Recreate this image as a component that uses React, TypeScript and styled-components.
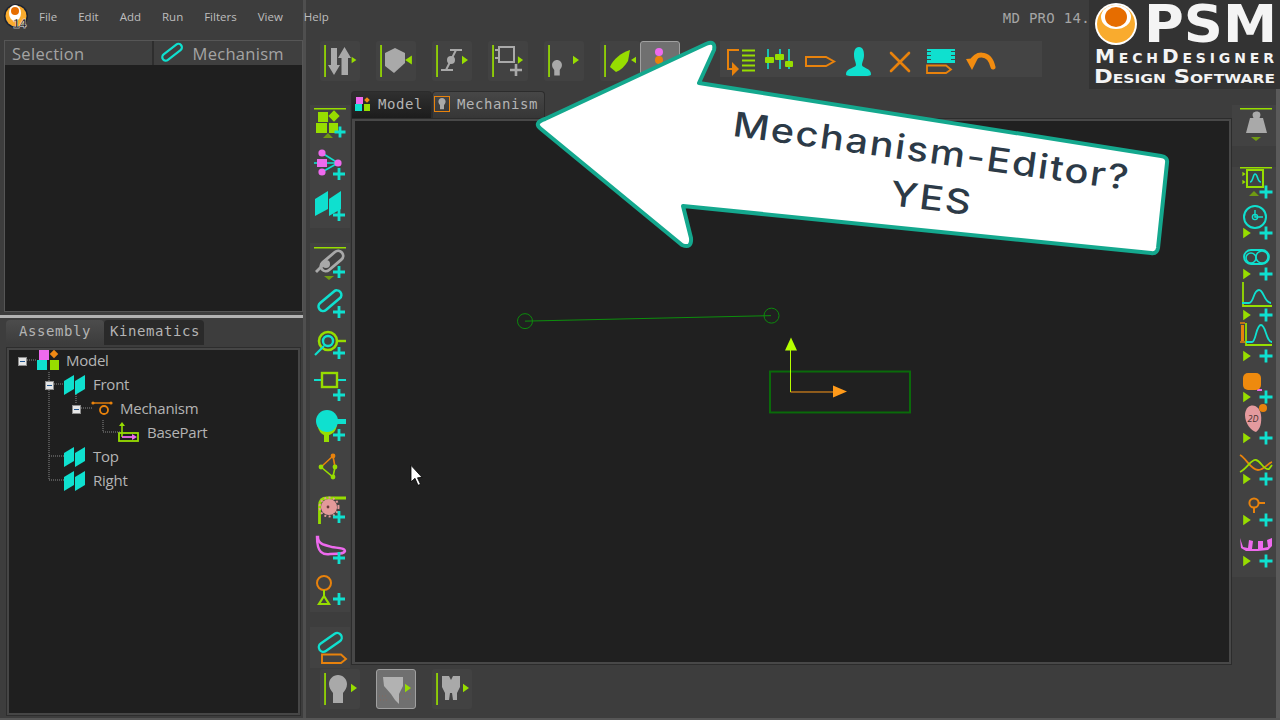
import React from "react";
import styled, { createGlobalStyle } from "styled-components";

const LIME = "#97dd00";
const CYAN = "#0fe0cf";
const ORANGE = "#e8820c";
const MAG = "#ee6aee";
const GREY = "#a9a9a9";
const DULL = "#6f9a12";

const Global = createGlobalStyle`
  html, body { margin: 0; padding: 0; background: #3d3d3d; }
  #root { width: 1280px; height: 720px; overflow: hidden; }
  * { box-sizing: border-box; }
`;

const Page = styled.div`
  position: relative;
  display: flex;
  width: 1280px;
  height: 720px;
  overflow: hidden;
  background: #3d3d3d;
  border-bottom: 2px solid #565656;
`;
const LeftColumn = styled.div`
  display: flex;
  flex-direction: column;
  width: 306px;
  flex: none;
  border-right: 3px solid #4f4f4f;
  padding-bottom: 2px;
`;
const MenuBar = styled.div`
  display: flex;
  align-items: center;
  height: 40px;
  flex: none;
  padding: 0 0 8px 4px;
`;
const MenuItems = styled.div`
  display: flex;
  flex: none;
  margin-left: 9px;
  gap: 21px;
`;
const MenuItem = styled.span`
  font: 11.5px "Open Sans", sans-serif;
  color: #bdbdbd;
  white-space: nowrap;
`;
const SelectionPanel = styled.div`
  display: flex;
  flex-direction: column;
  height: 272px;
  flex: none;
  margin-left: 4px;
  border: 1px solid #565656;
  background: #1f1f1f;
`;
const SelectionHeader = styled.div`
  display: flex;
  height: 24px;
  flex: none;
  gap: 2px;
  background: #2e2e2e;
`;
const HeaderCell = styled.div<{ $w: number }>`
  display: flex;
  align-items: center;
  width: ${(p) => p.$w}px;
  padding-left: 7px;
  gap: 10px;
  background: #3f3f3f;
  font: 16.5px "Open Sans", sans-serif;
  letter-spacing: 0.3px;
  color: #a4a4a4;
`;
const Splitter = styled.div`
  height: 3px;
  flex: none;
  margin: 3px 0 2px;
  background: #b2b2b2;
`;
const TabRow = styled.div`
  display: flex;
  height: 25px;
  flex: none;
  margin-left: 6px;
`;
const AsmTab = styled.div<{ $on?: boolean }>`
  display: flex;
  align-items: center;
  justify-content: center;
  width: ${(p) => (p.$on ? 98 : 100)}px;
  padding: 0 0 3px ${(p) => (p.$on ? 0 : 2)}px;
  border-radius: 4px 4px 0 0;
  background: ${(p) => (p.$on ? "linear-gradient(#4c4c4c, #3c3c3c)" : "#2a2a2a")};
  font: 14px "DejaVu Sans Mono", monospace;
  letter-spacing: 0.55px;
  color: #b4b4b4;
`;
const TreePanel = styled.div`
  position: relative;
  flex: 1;
  margin: 2px 2px 0 6px;
  padding: 1px 0 0;
  border: 1px solid #2d2d2d;
  box-shadow: inset 0 0 0 2px #464646;
  background: #1f1f1f;
`;
const ConnectorLayer = styled.svg`
  position: absolute;
  left: -7px;
  top: -348px;
  pointer-events: none;
`;
const TreeRow = styled.div<{ $level: number }>`
  display: flex;
  align-items: center;
  height: 24px;
  padding-left: ${(p) => 11 + p.$level * 27}px;
`;
const Expander = styled.span<{ $hidden?: boolean }>`
  position: relative;
  width: 9px;
  height: 9px;
  flex: none;
  border: 1px solid #8d8d8d;
  background: #e6e6e6;
  visibility: ${(p) => (p.$hidden ? "hidden" : "visible")};
  &::after {
    content: "";
    position: absolute;
    left: 1px;
    right: 1px;
    top: 3px;
    height: 1px;
    background: #21568f;
  }
`;
const TreeIcon = styled.svg`
  flex: none;
  margin: 0 7px 0 10px;
`;
const TreeLabel = styled.span`
  padding-bottom: 3px;
  font: 15px "Open Sans", sans-serif;
  color: #b4b4b4;
  letter-spacing: -0.25px;
`;
const Workspace = styled.div`
  display: flex;
  flex-direction: column;
  flex: 1;
  min-width: 0;
  border-right: 4px solid #5a5a5a;
`;
const VersionStrip = styled.div`
  display: flex;
  justify-content: flex-end;
  align-items: center;
  height: 41px;
  flex: none;
  padding: 0 186px 5px 0;
  font: 14px "DejaVu Sans Mono", monospace;
  letter-spacing: 0.3px;
  color: #a5a5a5;
  white-space: nowrap;
`;
const MainToolbar = styled.div`
  display: flex;
  height: 40px;
  flex: none;
  padding-left: 14px;
`;
const SpacedGroup = styled.div`
  display: flex;
  gap: 16px;
`;
const TightGroup = styled.div`
  display: flex;
`;
const ToolBand = styled.div`
  display: flex;
  width: 322px;
  height: 36px;
  flex: none;
  background: #444444;
`;
const ToolButton = styled.div<{ $active?: boolean }>`
  display: flex;
  width: 40px;
  height: 40px;
  flex: none;
  border-radius: 3px;
  background: ${(p) => (p.$active ? "#707070" : "#424242")};
  border: ${(p) => (p.$active ? "1px solid #a0a0a0" : "none")};
`;
const Spacer = styled.div`
  width: 40px;
  flex: none;
`;
const MiddleRow = styled.div`
  display: flex;
  flex: 1;
  min-height: 0;
`;
const SideBar = styled.div<{ $side: "left" | "right" }>`
  display: flex;
  flex-direction: column;
  flex: none;
  width: ${(p) => (p.$side === "left" ? 40 : 44)}px;
  margin-left: ${(p) => (p.$side === "left" ? 4 : 0)}px;
  padding-top: 24px;
`;
const SideGroup = styled.div<{ $gap?: number }>`
  display: flex;
  flex-direction: column;
  margin-bottom: ${(p) => p.$gap ?? 0}px;
  background: #424242;
`;
const CenterColumn = styled.div`
  display: flex;
  flex-direction: column;
  flex: 1;
  min-width: 0;
  margin-left: 1px;
  padding: 10px 0 3px;
`;
const DocTabs = styled.div`
  display: flex;
  height: 27px;
  flex: none;
`;
const DocTab = styled.div<{ $w: number; $on?: boolean }>`
  display: flex;
  align-items: center;
  gap: 7px;
  width: ${(p) => p.$w}px;
  padding: 0 0 3px ${(p) => (p.$on ? 3 : 1)}px;
  border-radius: 4px 4px 0 0;
  background: ${(p) => (p.$on ? "linear-gradient(#303030, #1c1c1c)" : "linear-gradient(#474747, #363636)")};
  border: 1px solid #2c2c2c;
  border-bottom: none;
  font: 14px "DejaVu Sans Mono", monospace;
  letter-spacing: 0.57px;
  color: #b4b4b4;
`;
const CanvasFrame = styled.div`
  flex: 1;
  min-height: 0;
  border: 1px solid #2c2c2c;
  background: #484848;
  padding: 2px 2px 2px 3px;
`;
const Canvas = styled.svg`
  display: block;
  width: 100%;
  height: 100%;
  background: #202020;
`;
const BottomToolbar = styled.div`
  display: flex;
  gap: 16px;
  height: 50px;
  flex: none;
  padding: 1px 0 9px 14px;
`;
const LogoBox = styled.div`
  position: absolute;
  left: 1089px;
  top: 0;
  width: 191px;
  height: 89px;
  background: #333333;
`;
const LogoSvg = styled.svg`
  position: absolute;
  left: 0;
  top: 0;
`;
const ArrowOverlay = styled.svg`
  position: absolute;
  left: 0;
  top: 0;
  pointer-events: none;
`;
const IconSvg = styled.svg`
  display: block;
  flex: none;
  overflow: visible;
`;

const Plus = ({ x, y, s = 6 }: { x: number; y: number; s?: number }) => (
  <path d={`M${x - s} ${y}H${x + s}M${x} ${y - s}V${y + s}`} stroke={CYAN} strokeWidth={2.8} fill="none" />
);
const Bar = ({ x = 5, y1 = 4, y2 = 36 }: { x?: number; y1?: number; y2?: number }) => (
  <rect x={x - 0.8} y={y1} width={1.7} height={y2 - y1} fill={LIME} />
);
const Tri = ({ x, y, s = 4, left }: { x: number; y: number; s?: number; left?: boolean }) => (
  <polygon
    points={left ? `${x + s},${y - s * 1.3} ${x + s},${y + s * 1.3} ${x - s},${y}` : `${x - s},${y - s * 1.4} ${x - s},${y + s * 1.4} ${x + s},${y}`}
    fill={LIME}
  />
);
const Top = ({ w = 32, x = 4, y = 3 }: { w?: number; x?: number; y?: number }) => (
  <rect x={x} y={y} width={w} height={1.5} fill={LIME} />
);
const Ico = ({ w, h, children }: { w: number; h: number; children: React.ReactNode }) => (
  <IconSvg width={w} height={h} viewBox={`0 0 ${w} ${h}`}>
    {children}
  </IconSvg>
);
const Bulb = ({ x, y, s = 1 }: { x: number; y: number; s?: number }) => (
  <path
    transform={`translate(${x} ${y}) scale(${s})`}
    d="M0 0C5 0 9 4 9 9C9 13 7 15 5 18V28H-5V18C-7 15 -9 13 -9 9C-9 4 -5 0 0 0Z"
    fill={GREY}
  />
);

const topIcons: React.ReactNode[] = [
  <>
    <Bar />
    <path d="M11 7H17V24H20L14 34L8 24H11Z" fill={GREY} />
    <path d="M24.5 6L31 17H28V34H21.5V17H18Z" fill={GREY} />
    <Tri x={34} y={19} s={2.4} />
  </>,
  <>
    <Bar />
    <path d="M19 7L29 12V22L18 32L9 25V12Z" fill={GREY} />
    <Tri x={32.5} y={19} s={3.4} left />
  </>,
  <>
    <Bar />
    <path d="M18 9H30M9 29H21M24 9L14 29" stroke={GREY} strokeWidth={2} fill="none" />
    <circle cx={19} cy={19} r={4} fill={GREY} />
    <Tri x={33} y={19} s={3} />
  </>,
  <>
    <Bar />
    <rect x={11} y={6} width={15} height={15} fill="none" stroke={GREY} strokeWidth={2} />
    <path d="M7 9H11M7 17H11" stroke={GREY} strokeWidth={2} />
    <path d="M22 29H34M28 23V35" stroke={GREY} strokeWidth={2.6} />
    <Tri x={32.5} y={19} s={2.6} />
  </>,
  <>
    <Bar />
    <Bulb x={13} y={19} s={0.55} />
    <Tri x={32} y={19} s={3} />
  </>,
  <>
    <Bar />
    <path d="M10 26C13 18 21 12 30 9L28 20C25 25 21 29 16 31Z" fill={LIME} />
    <Tri x={33.5} y={19} s={2.5} left />
  </>,
];
const rightTopIcons: React.ReactNode[] = [
  <>
    <path d="M19 9H8V28H14" fill="none" stroke={ORANGE} strokeWidth={2} />
    <polygon points="12,21 12,35 19,28" fill={ORANGE} />
    <path d="M22 9.5H35M22 14.5H35M22 19.5H35M22 24.5H35M22 29.5H35" stroke={LIME} strokeWidth={2.2} />
  </>,
  <>
    <path d="M8 8V28M20 8V28M29 8V28" stroke={CYAN} strokeWidth={1.6} />
    <rect x={5} y={16} width={9} height={6} rx={1} fill={LIME} />
    <rect x={15} y={13} width={9} height={6} rx={1} fill={LIME} />
    <rect x={25} y={20} width={8} height={6} rx={1} fill={LIME} />
  </>,
  <path d="M6 16H26L34 20.5L26 25H6Z" fill="none" stroke={ORANGE} strokeWidth={2} />,
  <path d="M19 6C23 6 24 10 24 14C24 19 22 21 22 24C22 27 31 27 31 33C31 35 29 35 19 35C8 35 6 35 6 33C6 27 16 27 16 24C16 21 14 19 14 14C14 10 15 6 19 6Z" fill={CYAN} />,
  <path d="M11 12L29 30M29 12L11 30" stroke={ORANGE} strokeWidth={2.6} strokeLinecap="round" />,
  <>
    <rect x={7} y={8} width={28} height={14} fill={CYAN} />
    <path d="M7 10.5H35M7 14.5H35M7 18.5H35" stroke="#3d3d3d" strokeWidth={0.9} strokeDasharray="4 20" />
    <path d="M7 24.5H26L31 28.5L26 32H7Z" fill="none" stroke={ORANGE} strokeWidth={1.8} />
  </>,
  <>
    <path d="M12 21C14 13 29 9 33 26" fill="none" stroke="#f28c10" strokeWidth={5} strokeLinecap="round" />
    <polygon points="6,18 18,17 12,29" fill="#f28c10" />
  </>,
];

const leftIcons: { key: string; node: React.ReactNode }[] = [
  { key: "model", node: <>
    <Top />
    <rect x={8} y={7} width={10} height={10} fill={LIME} />
    <rect x={20} y={7} width={8} height={8} transform="rotate(45 24 11)" fill={LIME} />
    <rect x={6} y={18} width={11} height={10} fill={LIME} />
    <rect x={19} y={18} width={9} height={10} fill={LIME} />
    <Plus x={30} y={27} s={5.5} />
    <polygon points="18,28 13,33 23,33" fill={DULL} />
  </> },
  { key: "nodes", node: <>
    <path d="M12 7L28 17M12 17H28M12 26L28 17" stroke={CYAN} strokeWidth={1.6} />
    <path d="M4 17H10" stroke={CYAN} strokeWidth={1.6} />
    <rect x={7} y={13} width={10} height={8} fill={MAG} />
    <circle cx={12} cy={7} r={3.6} fill={MAG} />
    <circle cx={28} cy={17} r={3.6} fill={MAG} />
    <circle cx={12} cy={26} r={3.6} fill={MAG} />
    <Plus x={29} y={28} />
  </> },
  { key: "planes", node: <>
    <path d="M5 12L18 4V22L5 29Z" fill={CYAN} />
    <path d="M19 12L31 4V22L19 29Z" fill={CYAN} />
    <Plus x={29} y={28} />
  </> },
  { key: "linkgrey", node: <>
    <Top y={4} />
    <rect x={9} y={13} width={26} height={10} rx={5} transform="rotate(-40 22 18)" fill="none" stroke={GREY} strokeWidth={2.8} />
    <path d="M6 29L14 21" stroke={GREY} strokeWidth={2.8} />
    <circle cx={16} cy={21} r={4} fill={GREY} />
    <Plus x={29} y={29} />
    <polygon points="14,33 24,33 19,37" fill={DULL} />
  </> },
  { key: "link", node: <>
    <rect x={6} y={12} width={27} height={9} rx={4.5} transform="rotate(-40 20 16)" fill="none" stroke={CYAN} strokeWidth={2.6} />
    <Plus x={29} y={28} />
  </> },
  { key: "joint", node: <>
    <circle cx={18} cy={16} r={9} fill="none" stroke={LIME} strokeWidth={2.6} />
    <circle cx={18} cy={16} r={5} fill="none" stroke={CYAN} strokeWidth={2.4} />
    <path d="M5 30L14 21" stroke={CYAN} strokeWidth={2.2} />
    <path d="M27 16H36" stroke={LIME} strokeWidth={2.4} />
    <Plus x={29} y={28} />
  </> },
  { key: "box", node: <>
    <path d="M4 14H12M27 14H36" stroke={CYAN} strokeWidth={2.2} />
    <rect x={12} y={7} width={15} height={14} fill="none" stroke={LIME} strokeWidth={2.4} />
    <Plus x={29} y={29} />
  </> },
  { key: "rocker", node: <>
    <path d="M7 18C9 24 11 27 14 28V35H19V28C23 27 26 24 27 18Z" fill={LIME} />
    <circle cx={17} cy={14} r={11} fill={CYAN} />
    <rect x={26} y={12} width={10} height={5} fill={CYAN} />
    <Plus x={29} y={28} />
  </> },
  { key: "triangle", node: <>
    <path d="M23 8L11 19M23 8L25 19" stroke={ORANGE} strokeWidth={1.6} />
    <path d="M11 19L23 29L25 19" stroke={LIME} strokeWidth={1.6} fill="none" />
    <circle cx={23} cy={8} r={2.4} fill={ORANGE} />
    <circle cx={11} cy={19} r={2.4} fill={LIME} />
    <circle cx={25} cy={19} r={2.4} fill={LIME} />
    <circle cx={23} cy={29} r={2.4} fill={LIME} />
  </> },
  { key: "gear", node: <>
    <path d="M9.5 35V17C9.5 12 12 9 17 9H36" fill="none" stroke={LIME} strokeWidth={2.8} />
    <circle cx={19} cy={18} r={8} fill="#e39a9a" />
    <circle cx={19} cy={18} r={9.5} fill="none" stroke="#e39a9a" strokeWidth={2} strokeDasharray="2 2.4" />
    <circle cx={18} cy={18} r={1.4} fill="#6b3a3a" />
    <Plus x={29} y={28} />
  </> },
  { key: "cam", node: <>
    <path d="M8 7C8 14 14 15 22 17C28 18 35 18 35 21C34 24 28 24 20 24C13 25 7 23 7 7Z" fill="none" stroke={MAG} strokeWidth={2.4} />
    <Plus x={29} y={28} />
  </> },
  { key: "pin", node: <>
    <circle cx={14} cy={12} r={7} fill="none" stroke={ORANGE} strokeWidth={2} />
    <path d="M14 19V25" stroke={LIME} strokeWidth={2} />
    <path d="M14 25L9 33H19Z" fill="none" stroke={LIME} strokeWidth={2.2} />
    <Plus x={29} y={28} />
  </> },
];

const rightIcons: { key: string; node: React.ReactNode }[] = [
  { key: "fn", node: <>
    <rect x={15} y={3} width={16} height={17} fill="none" stroke={LIME} strokeWidth={2} />
    <path d="M18 15C21 15 21 7 23 7C26 7 25 15 29 15" fill="none" stroke={CYAN} strokeWidth={1.6} />
    <Tri x={12} y={7} s={1.6} />
    <Tri x={12} y={15} s={1.6} />
    <Plus x={34} y={25} s={6.5} />
    <polygon points="22,24 17,29 27,29" fill={DULL} />
  </> },
  { key: "clock", node: <>
    <circle cx={23} cy={9} r={11} fill="none" stroke={CYAN} strokeWidth={2} />
    <path d="M23 2V9H31" fill="none" stroke={CYAN} strokeWidth={1.4} />
    <circle cx={23} cy={9} r={2.6} fill="none" stroke={CYAN} strokeWidth={1.4} />
    <Tri x={15} y={25} s={3.8} />
    <Plus x={34} y={25} s={6.5} />
  </> },
  { key: "belt", node: <>
    <rect x={12} y={1} width={25} height={14} rx={7} fill="none" stroke={CYAN} strokeWidth={1.8} />
    <circle cx={19} cy={9} r={5} fill="none" stroke={CYAN} strokeWidth={1.6} />
    <circle cx={30} cy={8} r={6} fill="none" stroke={CYAN} strokeWidth={1.6} />
    <Tri x={15} y={25} s={3.8} />
    <Plus x={34} y={25} s={6.5} />
  </> },
  { key: "motion", node: <>
    <path d="M11 -8V16H40" fill="none" stroke={LIME} strokeWidth={1.8} />
    <path d="M10 13H17C22 13 21 0 27 0C32 0 32 13 39 13" fill="none" stroke={CYAN} strokeWidth={1.8} />
    <Tri x={15} y={25} s={3.8} />
    <Plus x={34} y={25} s={6.5} />
  </> },
  { key: "motion2", node: <>
    <path d="M14 -8V14H40" fill="none" stroke={LIME} strokeWidth={1.8} />
    <path d="M14 11H20C24 11 24 -6 29 -6C34 -6 34 11 40 11" fill="none" stroke={CYAN} strokeWidth={1.8} />
    <rect x={9} y={-6} width={3} height={16} fill={ORANGE} />
    <path d="M8 -8H13M8 11H13" stroke={ORANGE} strokeWidth={1.6} />
    <Tri x={15} y={25} s={3.8} />
    <Plus x={34} y={25} s={6.5} />
  </> },
  { key: "blob", node: <>
    <path d="M26 12V18H30" fill="none" stroke={MAG} strokeWidth={1.8} />
    <rect x={11} y={1} width={18} height={17} rx={5} fill="#ee8a0e" />
    <Tri x={15} y={25} s={3.8} />
    <Plus x={34} y={25} s={6.5} />
  </> },
  { key: "cam2d", node: <>
    <path d="M18 -7C24 -9 28 -4 29 2C30 10 28 16 24 19C19 18 13 10 13 2C13 -2 15 -6 18 -7Z" fill="#e49a9e" />
    <circle cx={31} cy={-5} r={4} fill={ORANGE} />
    <text x={21} y={9} textAnchor="middle" fontFamily="Open Sans, sans-serif" fontStyle="italic" fontSize={9} fill="#4a3030">2D</text>
    <Tri x={15} y={25} s={3.8} />
    <Plus x={34} y={25} s={6.5} />
  </> },
  { key: "cross", node: <>
    <path d="M8 1C15 5 18 15 26 16C32 16 36 9 40 8" fill="none" stroke={ORANGE} strokeWidth={1.8} />
    <path d="M8 18C15 15 19 5 24 6C29 7 32 17 37 15L40 11" fill="none" stroke={LIME} strokeWidth={1.8} />
    <Tri x={15} y={25} s={3.8} />
    <Plus x={34} y={25} s={6.5} />
  </> },
  { key: "ring", node: <>
    <circle cx={22} cy={8} r={4.6} fill="none" stroke={ORANGE} strokeWidth={2} />
    <path d="M27 8H33M22 13V18" stroke={ORANGE} strokeWidth={2} />
    <Tri x={15} y={25} s={3.8} />
    <Plus x={34} y={25} s={6.5} />
  </> },
  { key: "teeth", node: <>
    <path d="M8 2L11 11L16 12L17 4L21 5L20 13L26 13L26 5L31 5L31 12L36 11L35 4L40 2V10L36 14L26 15L14 15L9 12Z" fill={MAG} />
    <Tri x={15} y={25} s={3.8} />
    <Plus x={34} y={25} s={6.5} />
  </> },
];

const ModelIcon = () => (
  <TreeIcon width={22} height={22} viewBox="0 0 22 22">
    <rect x={2} y={0} width={10} height={10} fill={MAG} />
    <rect x={14} y={1} width={6} height={6} transform="rotate(45 17 4)" fill="#f08a14" />
    <rect x={0} y={10} width={10} height={10} fill={CYAN} />
    <rect x={13} y={10} width={9} height={10} fill={LIME} />
  </TreeIcon>
);
const PlaneIcon = () => (
  <TreeIcon width={22} height={22} viewBox="0 0 22 22">
    <path d="M0 7L10 1V15L0 21Z" fill={CYAN} />
    <path d="M11 7L21 1V15L11 21Z" fill={CYAN} />
  </TreeIcon>
);
const MechIcon = () => (
  <TreeIcon width={22} height={22} viewBox="0 0 22 22">
    <path d="M1 5H21" stroke={ORANGE} strokeWidth={1.4} />
    <circle cx={2} cy={5} r={1.6} fill={ORANGE} />
    <circle cx={20} cy={5} r={1.6} fill={ORANGE} />
    <circle cx={13} cy={12} r={4} fill="none" stroke={ORANGE} strokeWidth={1.8} />
  </TreeIcon>
);
const PartIcon = () => (
  <TreeIcon width={22} height={22} viewBox="0 0 22 22">
    <rect x={1} y={11} width={19} height={8} fill="none" stroke={LIME} strokeWidth={1.8} />
    <path d="M4 3V15" stroke={LIME} strokeWidth={1.6} />
    <polygon points="4,0 1,4 7,4" fill={LIME} />
    <path d="M4 15H16" stroke={MAG} strokeWidth={1.8} />
    <polygon points="19,15 14,12 14,18" fill={MAG} />
  </TreeIcon>
);

const tree = [
  { label: "Model", level: 0, exp: true, icon: <ModelIcon /> },
  { label: "Front", level: 1, exp: true, icon: <PlaneIcon /> },
  { label: "Mechanism", level: 2, exp: true, icon: <MechIcon /> },
  { label: "BasePart", level: 3, exp: false, icon: <PartIcon /> },
  { label: "Top", level: 1, exp: false, icon: <PlaneIcon /> },
  { label: "Right", level: 1, exp: false, icon: <PlaneIcon /> },
];

export default function App() {
  return (
    <Page>
      <Global />
      <LeftColumn>
        <MenuBar>
          <Ico w={26} h={30}>
            <circle cx={12} cy={15} r={12} fill="#1b2333" />
            <circle cx={12} cy={15} r={10.5} fill="#f9ab2e" />
            <ellipse cx={11} cy={12} rx={6} ry={8} fill="#fff" />
            <circle cx={11} cy={10} r={4} fill="#e66d00" />
            <text x={9} y={27} fontFamily="Liberation Sans, sans-serif" fontWeight={700} fontSize={12} fill="#111" stroke="#fff" strokeWidth={0.4}>14</text>
          </Ico>
          <MenuItems>
            {["File", "Edit", "Add", "Run", "Filters", "View", "Help"].map((m) => (
              <MenuItem key={m}>{m}</MenuItem>
            ))}
          </MenuItems>
        </MenuBar>
        <SelectionPanel>
          <SelectionHeader>
            <HeaderCell $w={147}>Selection</HeaderCell>
            <HeaderCell $w={149}>
              <Ico w={22} h={20}>
                <rect x={0} y={6} width={23} height={7} rx={3.5} transform="rotate(-38 11 10)" fill="none" stroke={CYAN} strokeWidth={2.2} />
              </Ico>
              Mechanism
            </HeaderCell>
          </SelectionHeader>
        </SelectionPanel>
        <Splitter />
        <TabRow>
          <AsmTab $on>Assembly</AsmTab>
          <AsmTab>Kinematics</AsmTab>
        </TabRow>
        <TreePanel>
          <ConnectorLayer width={300} height={500} viewBox="0 0 300 500">
            <path
              d="M27 360H37M49 372V480M54 384H64M49 456H64M49 480H64M76 394V403M81 408H92M103 420V432H120"
              stroke="#8a8a8a"
              strokeWidth={1}
              strokeDasharray="1 1"
              fill="none"
            />
          </ConnectorLayer>
          {tree.map((t) => (
            <TreeRow key={t.label} $level={t.level}>
              <Expander $hidden={!t.exp} />
              {t.icon}
              <TreeLabel>{t.label}</TreeLabel>
            </TreeRow>
          ))}
        </TreePanel>
      </LeftColumn>
      <Workspace>
        <VersionStrip>MD PRO 14.</VersionStrip>
        <MainToolbar>
          <SpacedGroup>
            {topIcons.slice(0, 5).map((n, i) => (
              <ToolButton key={i}>
                <Ico w={40} h={40}>{n}</Ico>
              </ToolButton>
            ))}
            <TightGroup>
              <ToolButton>
                <Ico w={40} h={40}>{topIcons[5]}</Ico>
              </ToolButton>
              <ToolButton $active>
                <Ico w={38} h={38}>
                  <path d="M18 10V24" stroke={CYAN} strokeWidth={2} />
                  <circle cx={18} cy={10} r={4} fill={MAG} />
                  <circle cx={18} cy={18} r={4} fill={ORANGE} />
                </Ico>
              </ToolButton>
            </TightGroup>
          </SpacedGroup>
          <Spacer />
          <ToolBand>
            {rightTopIcons.map((n, i) => (
              <Ico key={i} w={40} h={40}>{n}</Ico>
            ))}
          </ToolBand>
        </MainToolbar>
        <MiddleRow>
          <SideBar $side="left">
            <SideGroup $gap={15}>
              {leftIcons.slice(0, 3).map((i) => (
                <Ico key={i.key} w={40} h={41}>{i.node}</Ico>
              ))}
            </SideGroup>
            <SideGroup $gap={15}>
              {leftIcons.slice(3).map((i) => (
                <Ico key={i.key} w={40} h={41}>{i.node}</Ico>
              ))}
            </SideGroup>
            <SideGroup>
              <Ico w={40} h={41}>
                <rect x={7} y={11} width={26} height={9} rx={4.5} transform="rotate(-35 20 15)" fill="none" stroke={CYAN} strokeWidth={2.4} />
                <path d="M12 27.5H31L36 32L31 36H12Z" fill="none" stroke={ORANGE} strokeWidth={1.9} />
              </Ico>
            </SideGroup>
          </SideBar>
          <CenterColumn>
            <DocTabs>
              <DocTab $w={81} $on>
                <Ico w={16} h={16}>
                  <rect x={1} y={1} width={7} height={7} fill={MAG} />
                  <rect x={10} y={2} width={4} height={4} transform="rotate(45 12 4)" fill="#f08a14" />
                  <rect x={0} y={8} width={7} height={7} fill={CYAN} />
                  <rect x={9} y={8} width={6} height={7} fill={LIME} />
                </Ico>
                Model
              </DocTab>
              <DocTab $w={113}>
                <Ico w={16} h={16}>
                  <rect x={0.5} y={0.5} width={15} height={15} fill="none" stroke={ORANGE} />
                  <Bulb x={8} y={2} s={0.4} />
                </Ico>
                Mechanism
              </DocTab>
            </DocTabs>
            <CanvasFrame>
              <Canvas viewBox="355 120 874 542" preserveAspectRatio="none">
                <circle cx={525} cy={320.5} r={7.5} fill="none" stroke="#0c8a0c" />
                <circle cx={771.5} cy={315} r={7.5} fill="none" stroke="#0c8a0c" />
                <path d="M525 320.5L771 315" stroke="#0c8f0c" strokeWidth={1} />
                <rect x={770} y={371} width={140} height={41} fill="none" stroke="#0a6a0a" strokeWidth={2} />
                <path d="M790.5 348V391.5" stroke="#b5ff00" strokeWidth={1} />
                <polygon points="791,337 785,350 797,350" fill="#b5ff00" />
                <path d="M790.5 391.5H834" stroke="#ff9a1a" strokeWidth={1} />
                <polygon points="833,385 833,397 847,391" fill="#ff9a1a" />
                <path d="M411 465V481.5L415 478L418 485L420.5 484L417.5 477.5L422 477Z" fill="#fff" stroke="#000" strokeWidth={0.8} />
              </Canvas>
            </CanvasFrame>
          </CenterColumn>
          <SideBar $side="right">
            <SideGroup $gap={21}>
              <Ico w={44} h={41}>
                <Top x={8} y={3} />
                <path d="M21 8C23 6 27 6 28 8C29 10 28 12 27.5 13H31L35 28H14L18 13H21.5C21 12 20 10 21 8Z" fill={GREY} />
                <polygon points="19,32 29,32 24,36" fill={DULL} />
              </Ico>
            </SideGroup>
            <SideGroup>
              {rightIcons.map((i) => (
                <Ico key={i.key} w={44} h={41}>
                  {i.key === "fn" && <Top x={8} y={0} />}
                  {i.node}
                </Ico>
              ))}
            </SideGroup>
          </SideBar>
        </MiddleRow>
        <BottomToolbar>
          <ToolButton>
            <Ico w={40} h={40}>
              <Bar />
              <Bulb x={18} y={6} />
              <Tri x={34} y={19} s={3} />
            </Ico>
          </ToolButton>
          <ToolButton $active>
            <Ico w={38} h={38}>
              <path d="M6 7H26V16L22 24V34L18 30L14 24L7 16Z" fill="#b2b2b2" />
              <path d="M2 26H10M24 24H34M3 30H12M22 29H33" stroke="#85685c" strokeWidth={1} strokeDasharray="1 2" />
              <Tri x={31} y={18} s={3} />
            </Ico>
          </ToolButton>
          <ToolButton>
            <Ico w={40} h={40}>
              <Bar />
              <path d="M10 7H17L19 11L21 7H28V18L25 24V31H21L20 24H18L17 31H13V24L10 18Z" fill={GREY} />
              <Tri x={34} y={19} s={3} />
            </Ico>
          </ToolButton>
        </BottomToolbar>
      </Workspace>
      <LogoBox>
        <LogoSvg width={191} height={89} viewBox="1089 0 191 89">
          <ellipse cx={1116} cy={24} rx={21} ry={21} fill="#fff" />
          <ellipse cx={1116} cy={24} rx={19} ry={19} fill="#f9ab2e" />
          <ellipse cx={1116} cy={17} rx={15} ry={12} fill="#fff" />
          <ellipse cx={1116} cy={17} rx={11} ry={10} fill="#e66d00" />
          <text x={1144} y={42} fontFamily="DejaVu Sans, sans-serif" fontWeight={700} fontSize={52} fill="#f4f4f4" textLength={133} lengthAdjust="spacingAndGlyphs">PSM</text>
          <text x={1095} y={63} fontFamily="DejaVu Sans, sans-serif" fontWeight={700} fontSize={20} style={{ fontVariant: "small-caps" }} fill="#f4f4f4" textLength={179} lengthAdjust="spacing">MechDesigner</text>
          <text x={1094} y={83} fontFamily="DejaVu Sans, sans-serif" fontWeight={700} fontSize={19} style={{ fontVariant: "small-caps" }} fill="#f4f4f4" textLength={181} lengthAdjust="spacingAndGlyphs">Design Software</text>
        </LogoSvg>
      </LogoBox>
      <ArrowOverlay width={1280} height={720} viewBox="0 0 1280 720">
        <path
          d="M545 119L706 44Q716 40 714 50L699 83L1161 156Q1168 157 1167 163L1158 248Q1157 254 1151 253L683 206L691 238Q692 249 682 245L541 129Q533 123 545 119Z"
          fill="#fff"
          stroke="#14a88e"
          strokeWidth={4}
          strokeLinejoin="round"
        />
        <text
          transform="translate(930 163) rotate(7.8) scale(1.17 1)"
          textAnchor="middle"
          fontFamily="Inter, sans-serif"
          fontWeight={500}
          fontSize={34}
          letterSpacing={1.5}
          fill="#2c3a47"
        >
          Mechanism-Editor?
        </text>
        <text
          transform="translate(930 210) rotate(7) scale(1.17 1)"
          textAnchor="middle"
          fontFamily="Inter, sans-serif"
          fontWeight={500}
          fontSize={34}
          letterSpacing={1.5}
          fill="#2c3a47"
        >
          YES
        </text>
      </ArrowOverlay>
    </Page>
  );
}
